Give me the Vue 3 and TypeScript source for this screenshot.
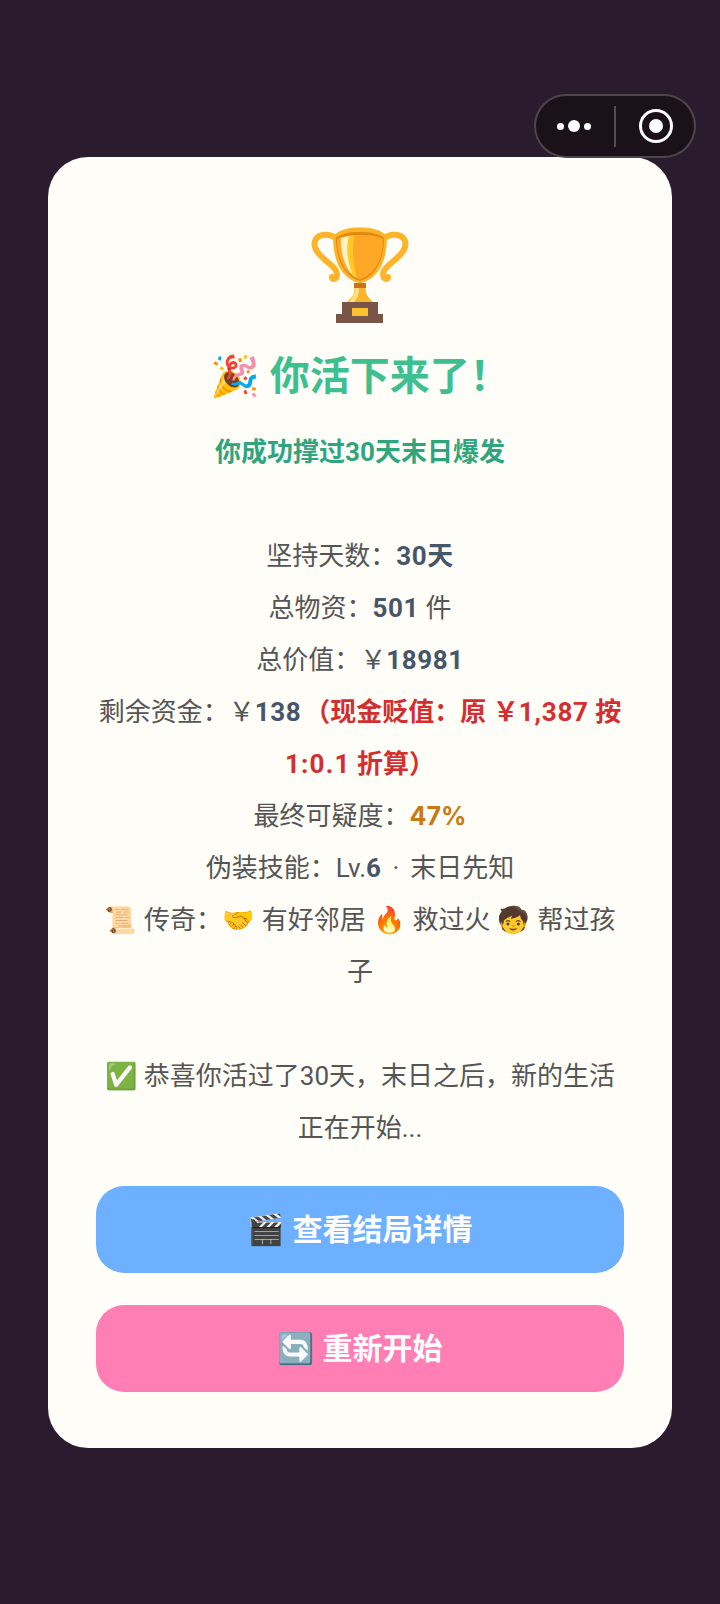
<template>
  <div class="page">
    <div class="capsule">
      <div class="capsule__more">
        <i class="dot"></i><i class="dot dot--big"></i><i class="dot"></i>
      </div>
      <div class="capsule__line"></div>
      <div class="capsule__close"><i></i></div>
    </div>

    <div class="card">
      <svg class="trophy" viewBox="0 0 120 110" width="120" height="110">
        <g fill="none" stroke="#fcb42a" stroke-width="6" stroke-linecap="round">
          <path d="M37 19C30 13 18 13 15 21C12 30 23 38 31 45C37 50 38 54 36 58C34 60 32 59 32 57" />
          <path d="M83 19C90 13 102 13 105 21C108 30 97 38 89 45C83 50 82 54 84 58C86 60 88 59 88 57" />
        </g>
        <path d="M54 66C56 74 51 78 46 83H74C69 78 64 74 66 66Z" fill="#fcb42a" />
        <path d="M55 68C55 74 52 78 49 82H54C58 78 59 73 59 68Z" fill="#ffe082" />
        <path d="M33 16C40 9 50 7.5 60 7.5C70 7.5 80 9 87 16C87 40 80 58 60 63.5C40 58 33 40 33 16Z" fill="#fcb42a" />
        <path d="M36 18C42 13 50 12 60 12C70 12 78 13 84 18C84 40 76 56 60 61C44 56 36 40 36 18Z" fill="#e08a12" />
        <path d="M37 19C43 15.5 50 15 60 15C70 15 77 15.5 83 19C83 40 75 54 60 59.5C45 54 37 40 37 19Z" fill="#ffa726" />
        <path d="M49 16L54 15.5C52 30 53 44 57 58L53 56C47 42 46 28 49 16Z" fill="#ffca28" />
        <path d="M41 18L49 16C46 28 47 42 53 55C45 48 40 32 41 18Z" fill="#fff3c4" />
        <rect x="54" y="63" width="12" height="5" fill="#c9731a" />
        <rect x="42" y="82" width="36" height="13" fill="#795548" />
        <rect x="36" y="94" width="47" height="9" fill="#795548" />
        <rect x="52" y="88" width="16" height="8" fill="#fbc02d" />
      </svg>
      <h1 class="title">🎉 你活下来了！</h1>
      <p class="subtitle">你成功撑过30天末日爆发</p>

      <div class="stats">
        <p>坚持天数：<b>30天</b></p>
        <p>总物资：<b>501</b> 件</p>
        <p>总价值：￥<b>18981</b></p>
        <p>剩余资金：￥<b>138</b><b class="red">（现金贬值：原 ￥<span class="amount">1,387</span> 按 <span class="ratio">1:0.1</span> 折算）</b></p>
        <p>最终可疑度：<b class="amber">{{ suspicion }}%</b></p>
        <p>伪装技能：Lv.<b>6</b><span class="sep">·</span>末日先知</p>
        <p class="legend">📜 传奇：🤝 有好邻居 🔥 救过火 🧒 帮过孩子</p>
      </div>

      <p class="ending">✅ 恭喜你活过了30天，末日之后，新的生活正在开始...</p>

      <button class="btn btn--blue">🎬 查看结局详情</button>
      <button class="btn btn--pink">🔄 重新开始</button>
    </div>
  </div>
</template>

<script setup lang="ts">
const suspicion: number = 47;
</script>

<style>
body {
  background: #2a1c2e;
}
</style>

<style scoped>
.page {
  position: relative;
  box-sizing: border-box;
  min-height: 1604px;
  padding: 157px 48px 0;
  background: #2a1c2e;
  font-family: Roboto, "Noto Sans CJK SC", "Noto Color Emoji", sans-serif;
}

.capsule {
  position: absolute;
  top: 94px;
  left: 534px;
  box-sizing: border-box;
  display: flex;
  align-items: center;
  width: 162px;
  height: 64px;
  border: 2px solid rgba(255, 255, 255, 0.22);
  border-radius: 32px;
  background: #1b1219;
}

.capsule__more {
  display: flex;
  align-items: center;
  justify-content: center;
  gap: 4px;
  width: 76px;
  margin-right: 2px;
}

.dot {
  width: 7px;
  height: 7px;
  border-radius: 50%;
  background: #fff;
}

.dot--big {
  width: 12px;
  height: 12px;
}

.capsule__line {
  width: 2px;
  height: 41px;
  background: rgba(255, 255, 255, 0.25);
}

.capsule__close {
  box-sizing: border-box;
  display: flex;
  align-items: center;
  justify-content: center;
  width: 34px;
  height: 34px;
  margin-left: 23px;
  border: 3px solid #fff;
  border-radius: 50%;
}

.capsule__close i {
  width: 14px;
  height: 14px;
  border-radius: 50%;
  background: #fff;
}

.card {
  box-sizing: border-box;
  height: 1291px;
  padding: 63px 48px 0;
  border-radius: 40px;
  background: #fffdf8;
  text-align: center;
}

.trophy {
  display: block;
  margin: 0 auto 19px;
}

.title {
  margin: 0;
  font-size: 40px;
  font-weight: 700;
  line-height: 56px;
  color: #3dbf90;
}

.subtitle {
  margin: 25px 0 0;
  font-size: 26px;
  font-weight: 700;
  line-height: 44px;
  color: #2fa57e;
}

.stats {
  margin-top: 56px;
  font-size: 26px;
  line-height: 52px;
  color: #555;
}

.stats p {
  margin: 0;
}

.stats b {
  letter-spacing: 0.6px;
  color: #475569;
}

.stats .red {
  margin-left: 3px;
  letter-spacing: 0;
  color: #d32f2f;
}

.amount {
  letter-spacing: 0.8px;
}

.ratio {
  letter-spacing: 1.2px;
}

.stats .amber {
  font-family: Inter, sans-serif;
  font-size: 25px;
  letter-spacing: 0;
  color: #c97a12;
}

.sep {
  margin: 0 11px;
}

.legend {
  word-spacing: 0.8px;
}

.ending {
  margin: 52px 0 0;
  font-size: 26px;
  line-height: 52px;
  color: #555;
}

.btn {
  display: block;
  width: 100%;
  height: 87px;
  margin-top: 32px;
  padding: 0 0 5px;
  border: none;
  border-radius: 28px;
  font-family: inherit;
  font-size: 30px;
  font-weight: 700;
  color: #fff;
}

.btn--blue {
  background: #6cb0ff;
}

.btn--pink {
  background: #ff7eb3;
}
</style>
